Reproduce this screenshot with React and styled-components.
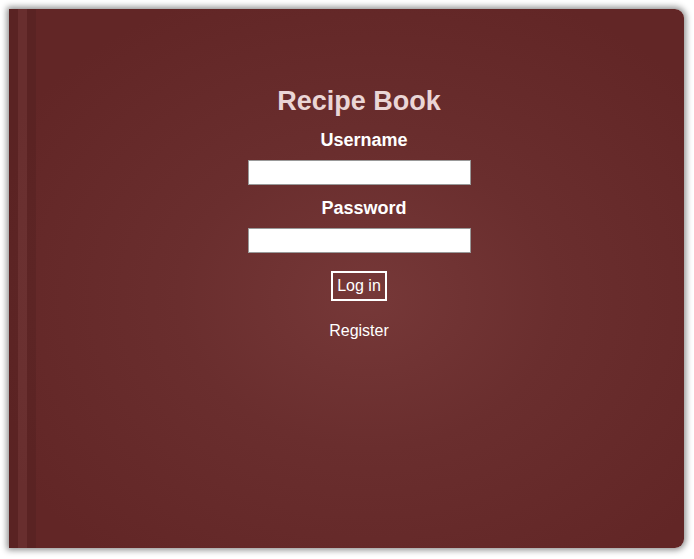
import React from 'react'
import styled, { createGlobalStyle } from 'styled-components'

const Global = createGlobalStyle`
  body {
    margin: 0;
    background: #fff;
    font-family: "Liberation Sans", Arial, sans-serif;
  }
`

const Page = styled.div`
  padding: 9px 10px 11px 9px;
`

const Book = styled.div`
  height: 539px;
  display: flex;
  border-radius: 0 9px 9px 0;
  background: radial-gradient(ellipse 420px 330px at 360px 290px, #763838 0%, #6a2e2e 45%, #622626 100%);
  box-shadow: 0 0 6px 2px rgba(0, 0, 0, 0.45);
  overflow: hidden;
`

const Spine = styled.div`
  width: 27px;
  flex: none;
  display: flex;
`

const Stripe = styled.div`
  width: 9px;
  background: ${p => (p.light ? 'rgba(255,255,255,0.04)' : 'rgba(0,0,0,0.08)')};
`

const Form = styled.form`
  flex: 1;
  display: flex;
  flex-direction: column;
  align-items: center;
  padding: 77px 2px 0 0;
`

const Title = styled.h1`
  margin: 0 0 13px;
  font-size: 27px;
  font-weight: bold;
  color: #ead6d6;
`

const Label = styled.label`
  font-size: 18px;
  font-weight: bold;
  color: #fff;
  margin: 0 0 9px 10px;
`

const Input = styled.input`
  box-sizing: border-box;
  width: 223px;
  height: 25px;
  border: 1px solid #999;
  background: #fff;
  margin: 0 0 ${p => p.$gap}px;
  padding: 2px 4px;
`

const Button = styled.button`
  background: transparent;
  border: 2px solid #fff;
  color: #fff;
  font-family: inherit;
  font-size: 16px;
  padding: 4px 4px;
  height: 30px;
  margin-bottom: 21px;
`

const Link = styled.a`
  color: #fff;
  font-size: 16px;
  text-decoration: none;
`

export default function App() {
  return (
    <Page>
      <Global />
      <Book>
        <Spine>
          <Stripe />
          <Stripe light />
          <Stripe />
        </Spine>
        <Form onSubmit={e => e.preventDefault()}>
          <Title>Recipe Book</Title>
          <Label>Username</Label>
          <Input type="text" $gap={13} />
          <Label>Password</Label>
          <Input type="password" $gap={18} />
          <Button type="submit">Log in</Button>
          <Link href="#">Register</Link>
        </Form>
      </Book>
    </Page>
  )
}
